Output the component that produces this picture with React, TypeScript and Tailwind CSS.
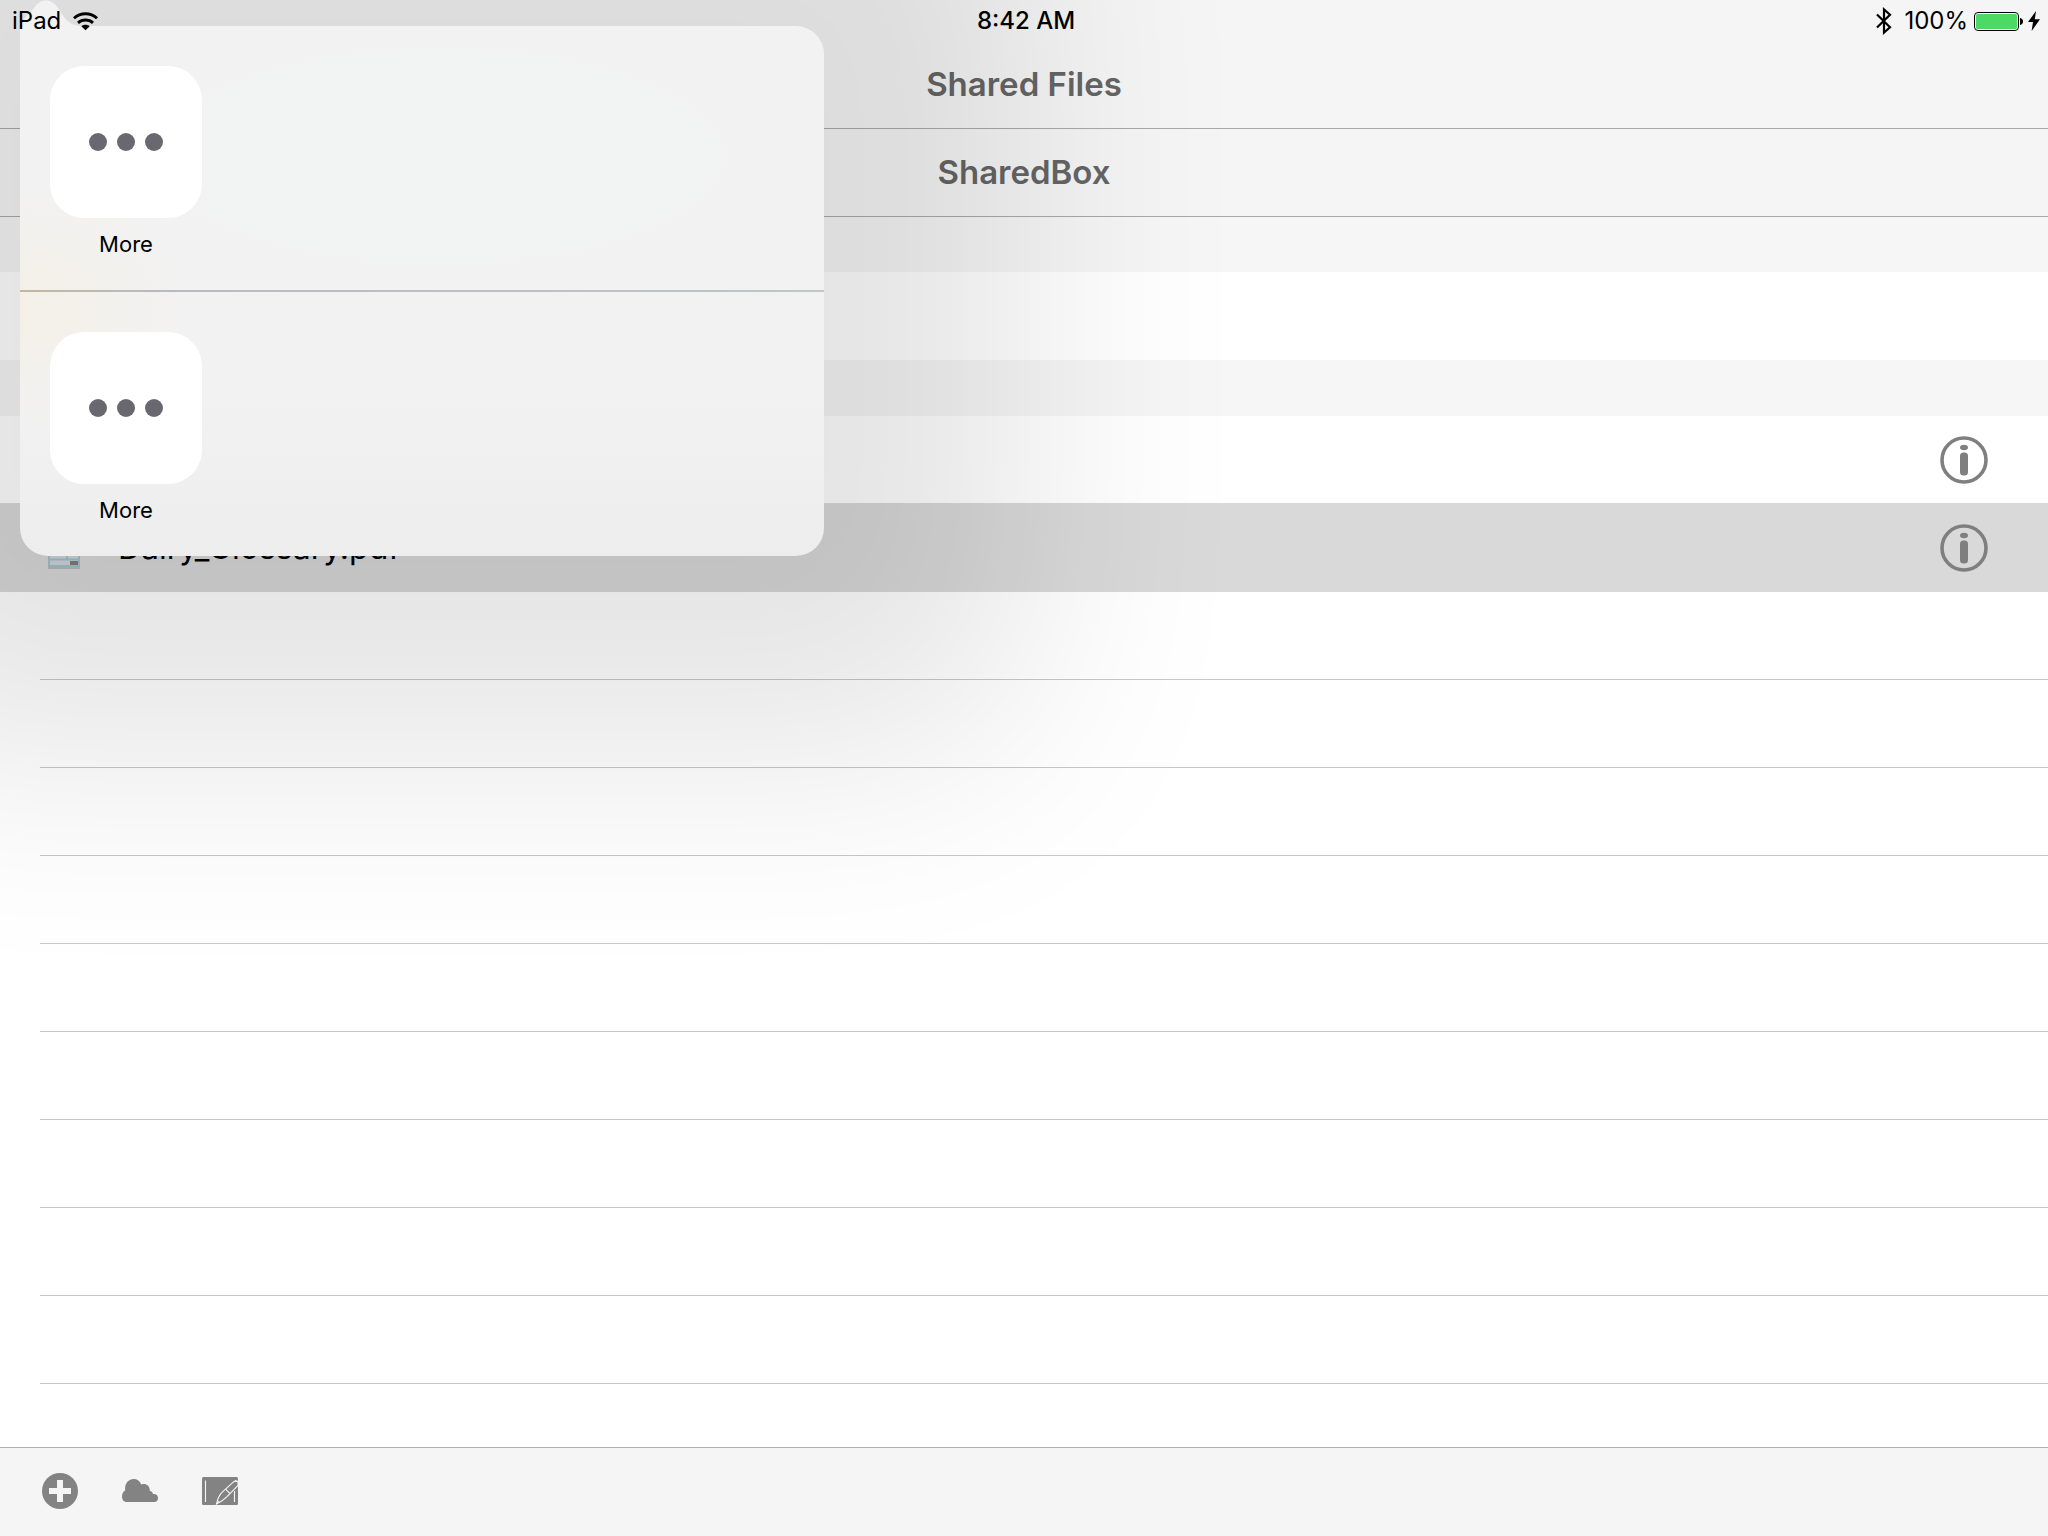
import React from "react";

const emptyRows = Array.from({ length: 10 }, (_, i) => i);

function WifiIcon() {
  return (
    <svg width="25" height="19" viewBox="0 0 25 19" fill="none" stroke="#000" strokeWidth="2.9" aria-hidden="true">
      <path d="M1 6.2 C7.5 0.2 17.5 0.2 24 6.2" />
      <path d="M5 10.8 C9.3 7 15.7 7 20 10.8" />
      <path d="M12.5 18.2 L8.3 14.2 C10.6 12.2 14.4 12.2 16.7 14.2 Z" fill="#000" stroke="none" />
    </svg>
  );
}

function BluetoothIcon() {
  return (
    <svg width="16" height="28" viewBox="0 0 16 28" fill="none" stroke="#000" strokeWidth="2.2" aria-hidden="true">
      <path d="M1 7.5 L14 20.3 L8 25.6 L8 2.4 L14 7.7 L1 20.5" />
    </svg>
  );
}

function BatteryIcon() {
  return (
    <svg width="49" height="19" viewBox="0 0 49 19" aria-hidden="true">
      <rect x="0.5" y="0.5" width="44" height="18" rx="3.5" fill="#fff" stroke="#000" />
      <rect x="2" y="2" width="41" height="15" rx="1.5" fill="#4cd964" />
      <path d="M46 6 C48.2 6.4 49 7.8 49 9.5 C49 11.2 48.2 12.6 46 13 Z" fill="#000" />
    </svg>
  );
}

function BoltIcon() {
  return (
    <svg width="12" height="20" viewBox="0 0 12 20" aria-hidden="true">
      <path d="M8 0 L0 11 H5 L3.6 20 L12 8.2 H6.8 Z" fill="#000" />
    </svg>
  );
}

function InfoIcon() {
  return (
    <svg width="48" height="48" viewBox="0 0 48 48" aria-hidden="true">
      <circle cx="24" cy="24" r="22" fill="none" stroke="#7f7f7f" strokeWidth="3.6" />
      <ellipse cx="24" cy="11.5" rx="4" ry="2.8" fill="#7f7f7f" />
      <rect x="20" y="16.5" width="8" height="23" rx="3.5" fill="#7f7f7f" />
    </svg>
  );
}

function DocumentIcon() {
  return (
    <svg width="32" height="42" viewBox="0 0 32 42" aria-hidden="true">
      <rect x="1" y="1" width="30" height="38" fill="#ced4d7" stroke="#a3c0cc" strokeWidth="2" />
      <path d="M1 16 H31 M1 32.5 H31 M19 16 V32" stroke="#a3c0cc" strokeWidth="2" />
      <rect x="22" y="34" width="8" height="4" fill="#7d7d7d" />
      <rect x="0" y="40" width="32" height="2" fill="#b8b8b8" />
    </svg>
  );
}

function PlusIcon() {
  return (
    <svg width="36" height="36" viewBox="0 0 36 36" aria-hidden="true">
      <circle cx="18" cy="18" r="18" fill="#838383" />
      <path d="M18 7 V29 M7 18 H29" stroke="#f5f5f5" strokeWidth="6" />
    </svg>
  );
}

function CloudIcon() {
  return (
    <svg width="36" height="36" viewBox="0 0 36 36" aria-hidden="true">
      <path
        d="M5 29 C1.8 29 0 26.8 0 23.5 C0 20.5 1.2 18.6 3.2 17.2 C2.4 11 6.2 6 11.6 6 C15.2 6 18 7.9 19.2 11.4 C23.4 9.8 28 12.4 27.8 17.8 C29.4 18.2 30.6 19.4 31 21 C33.8 20.6 36 22.2 36 25 C36 27.4 34.6 29 32.4 29 Z"
        fill="#838383"
      />
    </svg>
  );
}

function NotebookIcon() {
  return (
    <svg width="36" height="36" viewBox="0 0 36 36" aria-hidden="true">
      <rect x="0" y="4" width="36" height="28" rx="1.5" fill="#838383" />
      <path d="M3.5 7.5 V29 M32.5 18 V29" stroke="#f5f5f5" strokeWidth="1.1" fill="none" />
      <path
        d="M14.5 31 C15.5 26 17.5 21.5 20.5 18.8 L31 9.4 C32.5 8 34.5 7.8 36 8.8 V12.4 L25 23.6 C22.2 26.4 18.5 29.2 14.5 31 Z"
        fill="#838383"
        stroke="#f5f5f5"
        strokeWidth="1.1"
      />
      <path d="M14.5 31 L17 28 M23.6 16.2 L28 20.6 M33 7.4 L36 8.6" stroke="#f5f5f5" strokeWidth="1.1" fill="none" />
    </svg>
  );
}

function MoreAction() {
  return (
    <div className="flex h-[264px] items-start px-[30px] pt-10">
      <button type="button" className="flex flex-col items-center gap-3">
        <span className="flex size-[152px] items-center justify-center gap-[10px] rounded-[34px] bg-white">
          <span className="size-[18px] rounded-full bg-[#696871]" />
          <span className="size-[18px] rounded-full bg-[#696871]" />
          <span className="size-[18px] rounded-full bg-[#696871]" />
        </span>
        <span className="text-[22px] leading-7 text-black">More</span>
      </button>
    </div>
  );
}

function SharePopover() {
  return (
    <div
      role="dialog"
      aria-label="Share"
      className="absolute left-5 top-[26px] z-10 w-[804px] rounded-[28px] rounded-tl-none bg-[#f2f2f2] bg-[radial-gradient(ellipse_170px_120px_at_0px_280px,#f4f0e7,transparent),radial-gradient(ellipse_340px_130px_at_420px_130px,#f1f4f3,transparent),linear-gradient(to_bottom,#f2f2f2,#f2f2f2_70%,#ededee)] shadow-[0_0_230px_200px_rgba(0,0,0,0.105)]"
    >
      <svg className="absolute -top-[26px] left-0" width="62" height="27" viewBox="0 0 62 27" aria-hidden="true">
        <path d="M0 27 C4 19 8 14 14 8 C20 -2 32 -2 38 8 C44 17 48 26 62 26 V27 Z" fill="#f2f2f2" />
      </svg>
      <MoreAction />
      <div className="h-[2px] bg-[linear-gradient(to_right,#c0b99c,#b9bac0_120px,#c2c4cb)]" />
      <MoreAction />
    </div>
  );
}

export default function App() {
  return (
    <div className="relative flex h-screen flex-col overflow-hidden bg-white font-['Inter','Liberation_Sans',sans-serif] text-black">
      <header className="shrink-0 bg-[#f5f5f5]">
        <div className="relative z-20 grid h-10 grid-cols-[1fr_auto_1fr] items-center pl-3 pr-2 pt-[2px] text-2xl leading-[38px]">
          <div className="flex items-center gap-3">
            <span>iPad</span>
            <WifiIcon />
          </div>
          <span className="font-medium">8:42 AM</span>
          <div className="flex items-center justify-end">
            <BluetoothIcon />
            <span className="ml-3 mr-[6px]">100%</span>
            <BatteryIcon />
            <span className="ml-[5px]">
              <BoltIcon />
            </span>
          </div>
        </div>
        <h1 className="h-[89px] border-b border-[#a9a9a9] text-center text-[33px] font-semibold leading-[88px] text-[#656565]">
          Shared Files
        </h1>
        <h2 className="h-[88px] border-b border-[#a9a9a9] text-center text-[33px] font-semibold leading-[87px] text-[#656565]">
          SharedBox
        </h2>
      </header>

      <main className="min-h-0 flex-1 overflow-hidden">
        <div className="h-[55px] bg-[#f6f6f6]" />
        <div className="h-[88px]" />
        <div className="h-14 bg-[#f6f6f6]" />
        <ul>
          <li className="flex h-[87px] items-center justify-end pr-[60px]">
            <button type="button" aria-label="File details">
              <InfoIcon />
            </button>
          </li>
          <li className="flex h-[89px] items-center bg-[#d9d9d9] pl-12 pr-[60px]">
            <DocumentIcon />
            <span className="ml-[38px] flex-1 text-[32px] leading-10">Dairy_Glossary.pdf</span>
            <button type="button" aria-label="Dairy_Glossary.pdf details">
              <InfoIcon />
            </button>
          </li>
          {emptyRows.map((row) => (
            <li key={row} className="ml-10 h-[88px] border-b border-[#c8c8c8]" />
          ))}
        </ul>
      </main>

      <footer className="flex h-[89px] shrink-0 items-center gap-11 border-t border-[#b0b0b0] bg-[#f5f5f5] pb-[2px] pl-[42px]">
        <button type="button" aria-label="Add">
          <PlusIcon />
        </button>
        <button type="button" aria-label="Cloud">
          <CloudIcon />
        </button>
        <button type="button" aria-label="Sign">
          <NotebookIcon />
        </button>
      </footer>

      <SharePopover />
    </div>
  );
}
